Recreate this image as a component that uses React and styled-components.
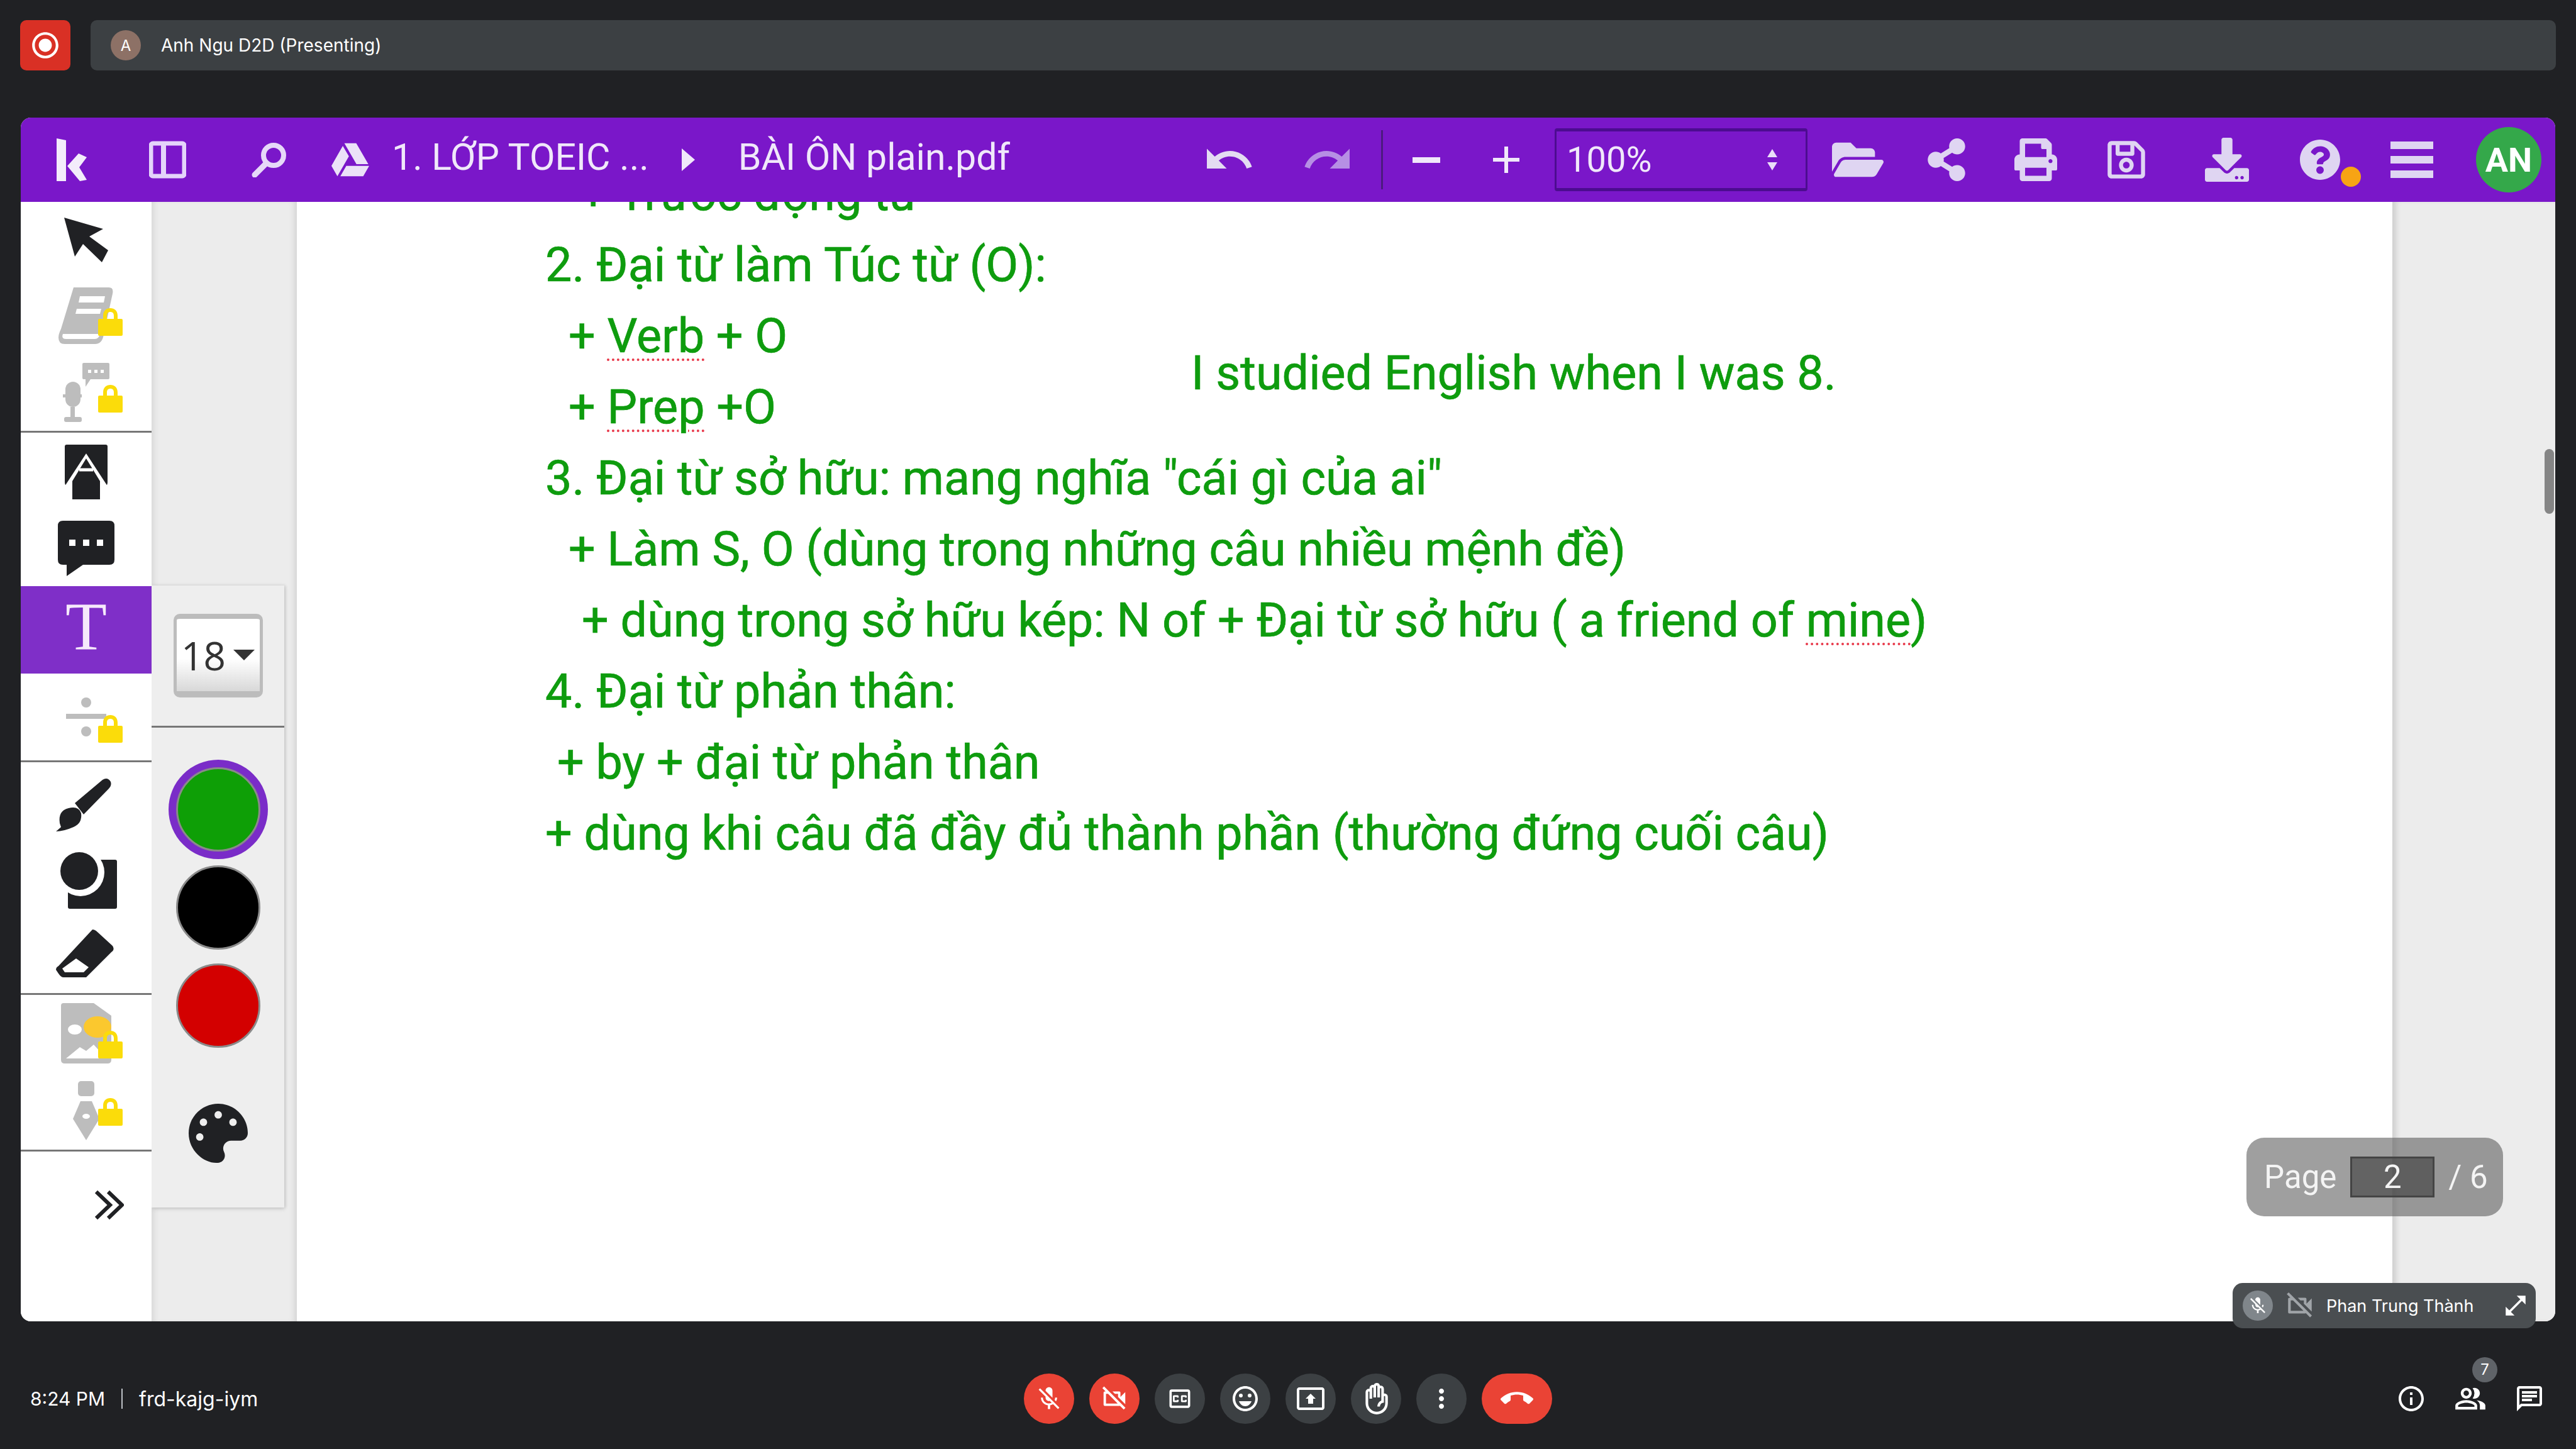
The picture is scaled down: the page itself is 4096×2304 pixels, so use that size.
import React from "react";
import styled, { createGlobalStyle } from "styled-components";
import { FaFolderOpen, FaShareAlt, FaPrint, FaRegSave, FaDownload, FaQuestionCircle, FaPalette, FaGoogleDrive } from "react-icons/fa";
import {
  MdUndo, MdRedo, MdAdd, MdMicOff, MdOutlineVideocamOff, MdOutlineClosedCaption, MdOutlineEmojiEmotions,
  MdOutlinePresentToAll, MdOutlineFrontHand, MdMoreVert, MdCallEnd, MdInfoOutline, MdOutlinePeopleAlt, MdOutlineChat,
  MdOpenInFull, MdRadioButtonChecked,
} from "react-icons/md";

const Global = createGlobalStyle`
  html, body { margin: 0; padding: 0; background: #202124; }
  * { box-sizing: border-box; }
`;

const LockIcon = () => (
  <svg width="39" height="47" viewBox="0 0 39 47">
    <path d="M8 22V15C8 7 13 3 19.500 3S31 7 31 15V22H25V15C25 11 23 9 19.500 9S14 11 14 15V22Z" fill="#fbdc0a" />
    <rect x="0" y="20" width="39" height="27" rx="2" fill="#fbdc0a" />
  </svg>
);

const Tool = ({ h, lock, lockTop, active, children }) => (
  <ToolBox $h={h} $active={active}>
    {children}
    {lock && (
      <LockSpot $top={lockTop}>
        <LockIcon />
      </LockSpot>
    )}
  </ToolBox>
);

const getLines = () => [
  { indent: 55, text: <>+ Trước động từ</> },
  { indent: 0, text: <>2. Đại từ làm Túc từ (O):</> },
  { indent: 37, text: <>+ <Misspelled>Verb</Misspelled> + O</> },
  { indent: 37, text: <>+ <Misspelled>Prep</Misspelled> +O</> },
  { indent: 0, text: <>3. Đại từ sở hữu: mang nghĩa "cái gì của ai"</> },
  { indent: 37, text: <>+ Làm S, O (dùng trong những câu nhiều mệnh đề)</> },
  { indent: 58, text: <>+ dùng trong sở hữu kép: N of + Đại từ sở hữu ( a friend of <Misspelled>mine</Misspelled>)</> },
  { indent: 0, text: <>4. Đại từ phản thân:</> },
  { indent: 19, text: <>+ by + đại từ phản thân</> },
  { indent: 0, text: <>+ dùng khi câu đã đầy đủ thành phần (thường đứng cuối câu)</> },
];

export default function App() {
  return (
    <Stage>
      <Global />
      <TopBar>
        <RecordBtn><MdRadioButtonChecked size={50} /></RecordBtn>
        <PresentBar>
          <MiniAvatar>A</MiniAvatar>
          <PresentName>Anh Ngu D2D (Presenting)</PresentName>
        </PresentBar>
      </TopBar>

      <Panel>
        <Header>
          <HeadIcon $w={48} $ml={57}>
            <svg width="48" height="68" viewBox="0 0 48 68" fill="#f3ecfb">
              <path d="M0 0L15 3V68H0Z" />
              <path d="M17 44L35 24L48 30L36 46L48 66L37 68Z" />
            </svg>
          </HeadIcon>
          <HeadIcon $w={59} $ml={99}>
            <svg width="59" height="60" viewBox="0 0 59 60">
              <rect x="3" y="4" width="53" height="52" rx="3" fill="none" stroke="#e4d4fa" strokeWidth="7" />
              <rect x="19" y="7" width="8" height="46" fill="#e4d4fa" />
            </svg>
          </HeadIcon>
          <HeadIcon $w={56} $ml={104}>
            <svg width="56" height="56" viewBox="0 0 56 56" fill="none" stroke="#e6d8f8">
              <circle cx="35" cy="21" r="16" strokeWidth="8" />
              <path d="M23 34L5 52" strokeWidth="9" strokeLinecap="round" />
            </svg>
          </HeadIcon>
          <HeadIcon $w={59} $ml={71}><FaGoogleDrive size={60} color="#ebe2f8" /></HeadIcon>
          <HeadTitle $ml={37}>1. LỚP TOEIC ...</HeadTitle>
          <HeadIcon $w={21} $ml={52}>
            <svg width="21" height="36" viewBox="0 0 21 36"><path d="M0 0L21 18L0 36Z" fill="#f0e8fa" /></svg>
          </HeadIcon>
          <HeadTitle $ml={69}>BÀI ÔN plain.pdf</HeadTitle>

          <HeadRight>
            <HeadIcon $w={66}><MdUndo size={84} color="#e4dcf2" /></HeadIcon>
            <HeadIcon $w={66} $ml={91}><MdRedo size={84} color="#b68fe4" /></HeadIcon>
            <HeadSep />
            <HeadIcon $w={44} $ml={47}>
              <svg width="44" height="9"><rect width="44" height="9" fill="#f0e8fa" /></svg>
            </HeadIcon>
            <HeadIcon $w={43} $ml={83}><MdAdd size={72} color="#f0e8fa" /></HeadIcon>
            <ZoomSelect>
              <span>100%</span>
              <svg width="18" height="34" viewBox="0 0 18 34" fill="#eadff8">
                <path d="M9 0L17 13H1Z" /><path d="M9 34L17 21H1Z" />
              </svg>
            </ZoomSelect>
            <HeadIcon $w={82} $ml={39}><FaFolderOpen size={82} color="#dfd5f2" /></HeadIcon>
            <HeadIcon $w={63} $ml={68}><FaShareAlt size={68} color="#dfd5f2" /></HeadIcon>
            <HeadIcon $w={68} $ml={77}><FaPrint size={68} color="#dfd5f2" /></HeadIcon>
            <HeadIcon $w={64} $ml={78}><FaRegSave size={68} color="#dfd5f2" /></HeadIcon>
            <HeadIcon $w={70} $ml={93}><FaDownload size={70} color="#dfd5f2" /></HeadIcon>
            <HeadIcon $w={55} $ml={85}>
              <FaQuestionCircle size={66} color="#dfd5f2" />
              <OrangeDot />
            </HeadIcon>
            <HeadIcon $w={68} $ml={85}>
              <svg width="68" height="58" fill="#dfd5f2">
                <rect width="68" height="12" y="0" /><rect width="68" height="12" y="23" /><rect width="68" height="12" y="46" />
              </svg>
            </HeadIcon>
            <UserAvatar>AN</UserAvatar>
          </HeadRight>
        </Header>

        <Body>
          <Sidebar>
            <ToolGroup>
              <Tool h={120}>
                <svg width="70" height="71" viewBox="0 0 70 71" fill="#202124">
                  <path d="M0 0L62 18L40 30L70 52L60 71L30 42L17 62Z" />
                </svg>
              </Tool>
              <Tool h={122} lock lockTop={46}>
                <svg width="88" height="90" viewBox="0 0 88 90">
                  <path fillRule="evenodd" fill="#bdbdbd" d="M24 0H80Q88 0 86 10L72 74Q70 90 58 90H10Q0 90 0 80Q0 74 4 66ZM7 74Q4 82 12 82H58Q64 82 66 74ZM34 14L32 24H72L74 14ZM29 34L27 42H66L68 34Z" />
                </svg>
              </Tool>
              <Tool h={122} lock lockTop={46}>
                <svg width="74" height="94" viewBox="0 0 74 94" fill="#bdbdbd">
                  <path d="M31 2Q31 0 33 0H72Q74 0 74 2V24Q74 26 72 26H44L36 38V26H33Q31 26 31 24Z" />
                  <g fill="#fff">
                    <rect x="40" y="11" width="5" height="5" />
                    <rect x="50" y="11" width="5" height="5" />
                    <rect x="60" y="11" width="5" height="5" />
                  </g>
                  <rect x="4" y="30" width="24" height="40" rx="12" />
                  <rect x="0" y="50" width="30" height="5" />
                  <rect x="12" y="70" width="7" height="16" />
                  <rect x="2" y="86" width="28" height="8" rx="3" />
                </svg>
              </Tool>
            </ToolGroup>
            <ToolGroup>
              <Tool h={124}>
                <svg width="68" height="87" viewBox="0 0 68 87">
                  <path d="M3 0H65Q68 0 68 3V60Q68 66 62 66H6Q0 66 0 60V3Q0 0 3 0Z" fill="#202124" />
                  <path d="M0 66L34 14L68 66V70H0Z" fill="#fff" />
                  <path d="M34 22L56 58V87H12V58Z" fill="#202124" />
                  <path d="M23 40H45" stroke="#fff" strokeWidth="5" />
                </svg>
              </Tool>
              <Tool h={120}>
                <svg width="90" height="88" viewBox="0 0 90 88" fill="#202124">
                  <path d="M8 0H82Q90 0 90 8V62Q90 70 82 70H40L14 88V70H8Q0 70 0 62V8Q0 0 8 0Z" />
                  <rect x="18" y="30" width="10" height="10" fill="#fff" />
                  <rect x="40" y="30" width="10" height="10" fill="#fff" />
                  <rect x="62" y="30" width="10" height="10" fill="#fff" />
                </svg>
              </Tool>
              <Tool h={139} active><SelectedT>T</SelectedT></Tool>
              <Tool h={138} lock lockTop={63}>
                <svg width="64" height="62" viewBox="0 0 64 62" fill="#bdbdbd">
                  <ellipse cx="32" cy="8" rx="8" ry="8" />
                  <rect x="0" y="26" width="64" height="8" />
                  <ellipse cx="32" cy="54" rx="8" ry="8" />
                </svg>
              </Tool>
            </ToolGroup>
            <ToolGroup>
              <Tool h={134}>
                <BrushIcon width="88" height="85" viewBox="0 0 88 85" fill="#202124">
                  <path d="M30 40L74 3Q82 -2 87 6Q89 12 84 17L44 58Z" />
                  <path d="M6 72Q3 52 20 48Q36 44 40 56Q42 72 28 78Q12 85 0 85Q6 80 8 78Z" />
                </BrushIcon>
              </Tool>
              <Tool h={108}>
                <ShapesIcon width="90" height="90" viewBox="0 0 90 90">
                  <rect x="12" y="12" width="78" height="78" rx="3" fill="#202124" />
                  <circle cx="32" cy="32" r="38" fill="#fff" />
                  <circle cx="30" cy="30" r="30" fill="#202124" />
                </ShapesIcon>
              </Tool>
              <Tool h={125}>
                <EraserIcon width="92" height="78" viewBox="0 0 92 78" fill="#202124">
                  <path fillRule="evenodd" d="M58 0Q62 0 66 4L90 26Q94 32 88 36L48 76H12Q8 76 4 70L0 64Q0 60 4 58ZM10 62L14 68H44L52 60L32 46Z" />
                </EraserIcon>
              </Tool>
            </ToolGroup>
            <ToolGroup>
              <Tool h={122} lock lockTop={54}>
                <svg width="80" height="96" viewBox="0 0 80 96">
                  <path fillRule="evenodd" fill="#bdbdbd" d="M4 0H52L80 20V90Q80 96 74 96H6Q0 96 0 90V4Q0 0 4 0ZM22 34A11 8 0 1 0 22 50A11 8 0 1 0 22 34ZM8 88H72L52 66L40 76L30 70Z" />
                  <ellipse cx="58" cy="38" rx="22" ry="17" fill="#fbc82e" />
                </svg>
              </Tool>
              <Tool h={124} lock lockTop={39}>
                <svg width="42" height="94" viewBox="0 0 42 94" fill="#bdbdbd">
                  <rect x="8" y="0" width="26" height="24" rx="5" />
                  <path fillRule="evenodd" d="M12 32H30L42 60L21 94L0 60ZM21 52A6 4 0 1 0 21 60A6 4 0 1 0 21 52Z" />
                </svg>
              </Tool>
            </ToolGroup>
            <ExpandRow>
              <svg width="46" height="48" viewBox="0 0 46 48" fill="none" stroke="#202124" strokeWidth="6">
                <path d="M2 3L24 24L2 45" />
                <path d="M21 3L43 24L21 45" />
              </svg>
            </ExpandRow>
          </Sidebar>

          <Gutter $side="left">
            <OptionsPanel>
              <SizeSelect>
                18
                <svg width="34" height="17" viewBox="0 0 34 17"><path d="M0 0H34L17 17Z" fill="#333" /></svg>
              </SizeSelect>
              <PanelRule />
              <Swatch $color="#0e9f06" $selected />
              <Swatch $color="#000000" />
              <Swatch $color="#d30000" />
              <PaletteSpot><FaPalette size={94} color="#202124" /></PaletteSpot>
            </OptionsPanel>
          </Gutter>

          <Doc>
            <FloatingText>I studied English when I was 8.</FloatingText>
            <DocLines>
              {getLines().map((l, i) => (
                <DocLine key={i} $indent={l.indent}>{l.text}</DocLine>
              ))}
            </DocLines>
          </Doc>

          <Gutter $side="right"><ScrollThumb /></Gutter>
        </Body>

        <PagePill>
          Page
          <PageInput>2</PageInput>
          / 6
        </PagePill>
      </Panel>

      <ParticipantTile>
        <TileMic><MdMicOff size={32} color="#fff" /></TileMic>
        <MdOutlineVideocamOff size={50} color="#a0a4a8" />
        <TileName>Phan Trung Thành</TileName>
        <MdOpenInFull size={42} color="#fff" />
      </ParticipantTile>

      <BottomBar>
        <MeetingInfo>
          8:24 PM
          <InfoDivider />
          <MeetingCode>frd-kajg-iym</MeetingCode>
        </MeetingInfo>
        <Controls>
          <RoundBtn $red><MdMicOff size={44} /></RoundBtn>
          <RoundBtn $red><MdOutlineVideocamOff size={46} /></RoundBtn>
          <RoundBtn><MdOutlineClosedCaption size={44} /></RoundBtn>
          <RoundBtn><MdOutlineEmojiEmotions size={48} /></RoundBtn>
          <RoundBtn><MdOutlinePresentToAll size={48} /></RoundBtn>
          <RoundBtn><MdOutlineFrontHand size={50} /></RoundBtn>
          <RoundBtn><MdMoreVert size={48} /></RoundBtn>
          <RoundBtn $red $wide><MdCallEnd size={52} /></RoundBtn>
        </Controls>
        <SideIcons>
          <MdInfoOutline size={48} />
          <PeopleWrap>
            <MdOutlinePeopleAlt size={52} />
            <CountBadge>7</CountBadge>
          </PeopleWrap>
          <MdOutlineChat size={48} />
        </SideIcons>
      </BottomBar>
    </Stage>
  );
}

const Stage = styled.div`
  position: relative;
  width: 4096px;
  height: 2304px;
  background: #202124;
  overflow: hidden;
  display: flex;
  flex-direction: column;
  font-family: "Inter", "Liberation Sans", sans-serif;
`;
const TopBar = styled.div`
  display: flex;
  flex: none;
  gap: 32px;
  height: 112px;
  margin: 32px 32px 0;
`;
const RecordBtn = styled.div`
  width: 80px;
  height: 80px;
  border-radius: 10px;
  background: #d93025;
  color: #fff;
  display: flex;
  align-items: center;
  justify-content: center;
`;
const PresentBar = styled.div`
  flex: 1;
  height: 80px;
  border-radius: 10px;
  background: #3c4043;
  display: flex;
  align-items: center;
  padding-left: 32px;
  gap: 32px;
  color: #fff;
`;
const MiniAvatar = styled.div`
  width: 48px;
  height: 48px;
  border-radius: 50%;
  background: #8d7166;
  font-size: 24px;
  display: flex;
  align-items: center;
  justify-content: center;
`;
const PresentName = styled.div`
  font-size: 28px;
`;
const Panel = styled.div`
  position: relative;
  flex: none;
  width: 4030px;
  height: 1914px;
  margin: 43px 0 0 33px;
  border-radius: 16px;
  overflow: hidden;
  display: flex;
  flex-direction: column;
  background: #fff;
`;
const Header = styled.div`
  position: relative;
  z-index: 3;
  height: 134px;
  flex: none;
  background: #7a17c9;
  display: flex;
  align-items: center;
`;
const HeadIcon = styled.div`
  position: relative;
  flex: none;
  width: ${(p) => p.$w}px;
  margin-left: ${(p) => p.$ml || 0}px;
  display: flex;
  align-items: center;
  justify-content: center;
  svg {
    flex: none;
  }
`;
const HeadTitle = styled.div`
  margin-left: ${(p) => p.$ml}px;
  padding-bottom: 10px;
  font-family: "Roboto", "Liberation Sans", sans-serif;
  font-size: 59px;
  color: #f0e8fa;
  white-space: nowrap;
`;
const HeadRight = styled.div`
  margin-left: auto;
  padding-right: 22px;
  display: flex;
  align-items: center;
`;
const HeadSep = styled.div`
  width: 3px;
  height: 94px;
  margin-left: 52px;
  background: #4c1a80;
`;
const ZoomSelect = styled.div`
  width: 402px;
  height: 100px;
  margin-left: 56px;
  border: 3px solid #4c0c90;
  border-top-width: 5px;
  border-bottom-width: 5px;
  border-radius: 4px;
  display: flex;
  align-items: center;
  justify-content: space-between;
  padding: 0 44px 0 16px;
  font-family: "Roboto", "Liberation Sans", sans-serif;
  font-size: 56px;
  color: #f0e8fa;
`;
const OrangeDot = styled.div`
  position: absolute;
  width: 32px;
  height: 32px;
  border-radius: 50%;
  background: #f7a414;
  right: -38px;
  top: 44px;
`;
const UserAvatar = styled.div`
  width: 104px;
  height: 104px;
  margin-left: 68px;
  border-radius: 50%;
  background: #34a84a;
  color: #fff;
  font-family: "Roboto", "Liberation Sans", sans-serif;
  font-weight: 700;
  font-size: 54px;
  display: flex;
  align-items: center;
  justify-content: center;
`;
const Body = styled.div`
  flex: 1;
  display: flex;
  min-height: 0;
`;
const Sidebar = styled.div`
  width: 208px;
  flex: none;
  background: #fff;
  display: flex;
  flex-direction: column;
  position: relative;
  z-index: 2;
`;
const ToolGroup = styled.div`
  border-bottom: 3px solid #777;
`;
const ToolBox = styled.div`
  position: relative;
  height: ${(p) => p.$h}px;
  background: ${(p) => (p.$active ? "#7f2fc8" : "transparent")};
  display: flex;
  align-items: center;
  justify-content: center;
`;
const BrushIcon = styled.svg`
  margin-left: -8px;
`;
const ShapesIcon = styled.svg`
  margin-left: 8px;
`;
const EraserIcon = styled.svg`
  margin-left: -4px;
`;
const LockSpot = styled.div`
  position: absolute;
  left: 123px;
  top: ${(p) => p.$top}px;
  line-height: 0;
`;
const SelectedT = styled.span`
  font-family: "Liberation Serif", serif;
  font-size: 108px;
  line-height: 1;
  padding-bottom: 12px;
  color: #f6e9fb;
`;
const ExpandRow = styled.div`
  display: flex;
  justify-content: flex-end;
  padding: 61px 44px 0 0;
`;
const Gutter = styled.div`
  position: relative;
  flex: none;
  width: ${(p) => (p.$side === "left" ? 231 : 259)}px;
  background: #ececec;
  box-shadow: ${(p) => (p.$side === "left" ? "inset -8px 0 8px -4px #d4d4d4, inset 10px 0 8px -6px #d8d8d8" : "inset 10px 0 8px -4px #cfcfcf")};
`;
const OptionsPanel = styled.div`
  position: absolute;
  left: 0;
  top: 610px;
  width: 211px;
  height: 989px;
  background: #eeeeee;
  box-shadow: 0 2px 6px #c4c4c4, 2px 0 4px #d0d0d0;
  display: flex;
  flex-direction: column;
  align-items: center;
`;
const SizeSelect = styled.div`
  width: 142px;
  height: 133px;
  margin-top: 45px;
  border-radius: 10px;
  border: 5px solid #bcbcbc;
  border-top-width: 8px;
  border-bottom-width: 10px;
  background: linear-gradient(#fff 55%, #d8d8d8);
  font-family: "Open Sans", "Liberation Sans", sans-serif;
  font-size: 62px;
  color: #333;
  display: flex;
  align-items: center;
  justify-content: center;
  gap: 12px;
`;
const PanelRule = styled.div`
  align-self: stretch;
  height: 3px;
  margin-top: 45px;
  background: #777;
`;
const Swatch = styled.div`
  width: 134px;
  height: 134px;
  margin-top: ${(p) => (p.$selected ? 63 : 22)}px;
  border-radius: 50%;
  background: ${(p) => p.$color};
  border: 3px solid #8a8a8a;
  box-shadow: ${(p) => (p.$selected ? "0 0 0 12px #7a2cc8" : "none")};
`;
const PaletteSpot = styled.div`
  margin-top: 89px;
  line-height: 0;
`;
const Doc = styled.div`
  position: relative;
  flex: 1;
  min-width: 0;
  background: #fff;
  overflow: hidden;
  padding-left: 395px;
  font-family: "Roboto", "Liberation Sans", sans-serif;
  color: #0e9c0e;
  font-size: 75.5px;
  -webkit-text-stroke: 0.7px #0e9c0e;
`;
const DocLines = styled.div`
  margin-top: -69px;
`;
const DocLine = styled.div`
  height: 113px;
  line-height: 113px;
  white-space: nowrap;
  padding-left: ${(p) => p.$indent}px;
`;
const Misspelled = styled.span`
  text-decoration: underline dotted #e8394a 4px;
  text-underline-offset: 10px;
`;
const FloatingText = styled.div`
  position: absolute;
  left: 1422px;
  top: 228px;
  white-space: nowrap;
`;
const ScrollThumb = styled.div`
  position: absolute;
  right: 2px;
  top: 393px;
  width: 15px;
  height: 103px;
  border-radius: 8px;
  background: #858585;
`;
const PagePill = styled.div`
  position: absolute;
  z-index: 3;
  left: 3539px;
  top: 1622px;
  width: 408px;
  height: 125px;
  border-radius: 28px;
  background: rgba(95, 95, 95, 0.6);
  color: #f4f4f4;
  font-family: "Roboto", "Liberation Sans", sans-serif;
  font-size: 51px;
  display: flex;
  align-items: center;
  padding-left: 28px;
  gap: 22px;
`;
const PageInput = styled.div`
  width: 134px;
  height: 65px;
  background: rgba(50, 50, 50, 0.55);
  border: 3px solid #444;
  display: flex;
  align-items: center;
  justify-content: center;
`;
const ParticipantTile = styled.div`
  position: absolute;
  left: 3550px;
  top: 2040px;
  width: 482px;
  height: 72px;
  border-radius: 16px;
  background: #4a4e51;
  display: flex;
  align-items: center;
  padding-left: 16px;
`;
const TileMic = styled.div`
  width: 48px;
  height: 48px;
  margin-right: 18px;
  border-radius: 50%;
  background: #80868b;
  display: flex;
  align-items: center;
  justify-content: center;
`;
const TileName = styled.div`
  width: 297px;
  padding-left: 17px;
  color: #fff;
  font-size: 27px;
  white-space: nowrap;
`;
const BottomBar = styled.div`
  flex: 1;
  display: grid;
  grid-template-columns: 1628px auto 1fr;
  padding-top: 83px;
  align-items: start;
  color: #fff;
`;
const MeetingInfo = styled.div`
  height: 80px;
  padding-left: 48px;
  display: flex;
  align-items: center;
  font-size: 30px;
`;
const MeetingCode = styled.span`
  font-size: 32px;
`;
const InfoDivider = styled.span`
  width: 2px;
  height: 32px;
  margin: 0 26px;
  background: #bdc1c6;
`;
const Controls = styled.div`
  display: flex;
  gap: 24px;
`;
const RoundBtn = styled.div`
  width: ${(p) => (p.$wide ? 112 : 80)}px;
  height: 80px;
  border-radius: 40px;
  background: ${(p) => (p.$red ? "#ea4335" : "#3c4043")};
  color: #fff;
  display: flex;
  align-items: center;
  justify-content: center;
`;
const SideIcons = styled.div`
  height: 80px;
  display: flex;
  align-items: center;
  justify-content: flex-end;
  gap: 44px;
  padding-right: 50px;
`;
const PeopleWrap = styled.div`
  position: relative;
  line-height: 0;
`;
const CountBadge = styled.div`
  position: absolute;
  left: 29px;
  top: -40px;
  width: 40px;
  height: 40px;
  border-radius: 50%;
  background: #5f6368;
  font-size: 24px;
  line-height: 40px;
  text-align: center;
`;
